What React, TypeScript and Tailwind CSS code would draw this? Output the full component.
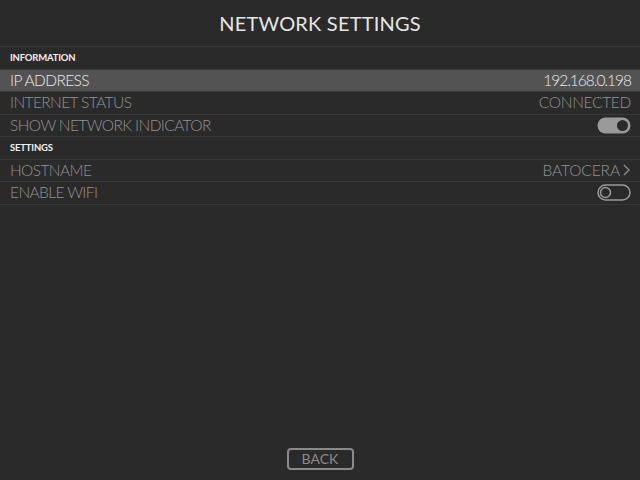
import React from "react";

function ToggleOn() {
  return (
    <svg width="34" height="17" viewBox="0 0 34 17">
      <rect x="0.5" y="0.5" width="33" height="16" rx="8" fill="#9a9a9a" />
      <circle cx="25.5" cy="8.5" r="5.5" fill="#2a2a2a" />
    </svg>
  );
}

function ToggleOff() {
  return (
    <svg width="34" height="17" viewBox="0 0 34 17">
      <rect x="1" y="1" width="32" height="15" rx="7.5" fill="none" stroke="#9a9a9a" strokeWidth="1.5" />
      <circle cx="8.5" cy="8.5" r="5" fill="none" stroke="#9a9a9a" strokeWidth="1.5" />
    </svg>
  );
}

function Header({ label }: { label: string }) {
  return (
    <div className="h-[22.5px] border-b border-[#3a3a3a] flex items-center px-[10px]">
      <span className="text-[9.5px] font-bold text-[#f0f0f0] tracking-[-0.2px]">{label}</span>
    </div>
  );
}

function Row({
  label,
  right,
  selected,
}: {
  label: string;
  right?: React.ReactNode;
  selected?: boolean;
}) {
  return (
    <div
      className={`h-[22.5px] border-b border-[#3a3a3a] flex items-center justify-between pl-[10px] pr-[9px] ${
        selected ? "bg-[#535353] text-[#ececec]" : "text-[#939393]"
      }`}
    >
      <span className="text-[15.5px] leading-none font-light tracking-[-0.6px]">{label}</span>
      <div className="flex items-center text-[15.5px] leading-none font-light">{right}</div>
    </div>
  );
}

export default function App() {
  return (
    <div
      className="w-[640px] h-[480px] bg-[#2a2a2a] flex flex-col"
      style={{ fontFamily: "Lato, 'Noto Sans', sans-serif" }}
    >
      <div className="h-[47px] border-b border-[#3a3a3a] flex items-center justify-center">
        <span className="text-[20px] text-[#e6e6e6] leading-none tracking-[0.2px]">NETWORK SETTINGS</span>
      </div>
      <Header label="INFORMATION" />
      <Row label="IP ADDRESS" selected right={<span className="tracking-[-1px]">192.168.0.198</span>} />
      <Row label="INTERNET STATUS" right={<span className="tracking-[-0.3px]">CONNECTED</span>} />
      <Row label="SHOW NETWORK INDICATOR" right={<ToggleOn />} />
      <Header label="SETTINGS" />
      <Row
        label="HOSTNAME"
        right={
          <>
            <span className="tracking-[-0.1px]">BATOCERA</span>
            <svg width="9" height="12" viewBox="0 0 9 12" className="ml-[2px]">
              <path d="M2 1 L7 6 L2 11" fill="none" stroke="#939393" strokeWidth="1.2" />
            </svg>
          </>
        }
      />
      <Row label="ENABLE WIFI" right={<ToggleOff />} />
      <div className="flex-1" />
      <div className="flex justify-center pb-[10px]">
        <div className="w-[67px] h-[22px] border-2 border-[#8a8a8a] rounded-[4px] flex items-center justify-center">
          <span className="text-[14px] text-[#8a8a8a] leading-none">BACK</span>
        </div>
      </div>
    </div>
  );
}
